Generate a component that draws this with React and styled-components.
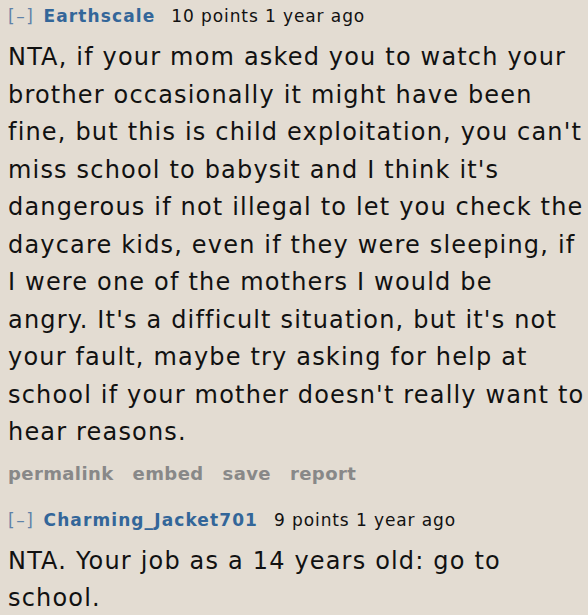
import React from "react";
import styled, { createGlobalStyle } from "styled-components";

const Global = createGlobalStyle`
  html, body { margin: 0; padding: 0; background: #e3dcd2; }
  body { font-family: Verdana, "DejaVu Sans", sans-serif; }
`;

const Page = styled.div`
  padding: 4px 8px 0 8px;
  display: flex;
  flex-direction: column;
`;

const Comment = styled.div`
  display: flex;
  flex-direction: column;
  margin-bottom: ${(p) => p.$gap || 0}px;
`;

const Tagline = styled.div`
  display: flex;
  align-items: baseline;
  font-size: 17px;
  line-height: 24px;
  letter-spacing: 0.9px;
  color: #111;
`;

const Toggle = styled.span`
  color: #5f82a8;
  letter-spacing: 1.6px;
  margin-right: 9px;
`;

const Author = styled.span`
  color: #336699;
  font-weight: bold;
  letter-spacing: 1.1px;
  margin-right: 16px;
`;

const Body = styled.div`
  font-size: 24px;
  line-height: 37.5px;
  letter-spacing: 1.18px;
  white-space: nowrap;
  color: #111;
  margin-top: 11px;
`;

const Actions = styled.div`
  display: flex;
  gap: 19px;
  margin-top: 10px;
  font-size: 18px;
  line-height: 24px;
  letter-spacing: 0.4px;
  font-weight: bold;
  color: #888;
`;

const lines1 = [
  "NTA, if your mom asked you to watch your",
  "brother occasionally it might have been",
  "fine, but this is child exploitation, you can't",
  "miss school to babysit and I think it's",
  "dangerous if not illegal to let you check the",
  "daycare kids, even if they were sleeping, if",
  "I were one of the mothers I would be",
  "angry. It's a difficult situation, but it's not",
  "your fault, maybe try asking for help at",
  "school if your mother doesn't really want to",
  "hear reasons.",
];

const lines2 = ["NTA. Your job as a 14 years old: go to", "school."];

const Text = ({ lines }) => (
  <Body>
    {lines.map((l, i) => (
      <React.Fragment key={i}>
        {l}
        {i < lines.length - 1 && <br />}
      </React.Fragment>
    ))}
  </Body>
);

export default function App() {
  return (
    <>
      <Global />
      <Page>
        <Comment $gap={22}>
          <Tagline>
            <Toggle>[–]</Toggle>
            <Author>Earthscale</Author>
            <span>10 points 1 year ago</span>
          </Tagline>
          <Text lines={lines1} />
          <Actions>
            <span>permalink</span>
            <span>embed</span>
            <span>save</span>
            <span>report</span>
          </Actions>
        </Comment>
        <Comment>
          <Tagline>
            <Toggle>[–]</Toggle>
            <Author>Charming_Jacket701</Author>
            <span>9 points 1 year ago</span>
          </Tagline>
          <Text lines={lines2} />
        </Comment>
      </Page>
    </>
  );
}
